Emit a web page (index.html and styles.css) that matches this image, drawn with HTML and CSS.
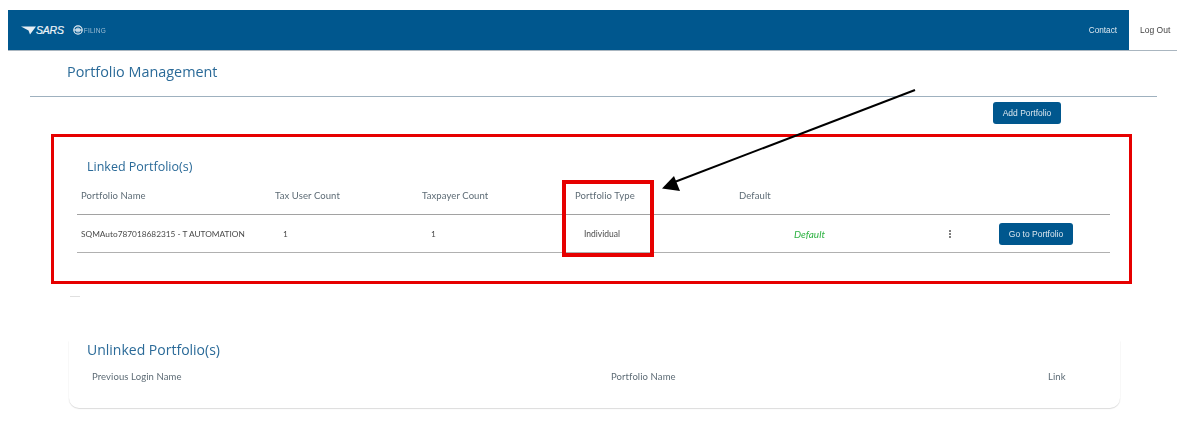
FILE: index.html
```html
<!DOCTYPE html>
<html lang="en">
<head>
<meta charset="utf-8">
<title>Portfolio Management</title>
<link rel="stylesheet" href="styles.css">
</head>
<body>
<header class="topbar">
  <div class="brand">
    <svg class="sars-mark" width="15" height="9" viewBox="0 0 15 9"><path d="M0 0.5 L15 0.5 L9 8.500 L7.500 4.500 Z" fill="#e6eef4"/></svg>
    <span class="sars">SARS</span>
    <svg class="efile-mark" width="10" height="10" viewBox="0 0 11 11"><circle cx="5.500" cy="5.500" r="4.600" fill="none" stroke="#e6eef4" stroke-width="1.300"/><circle cx="5.500" cy="5.500" r="2.800" fill="#9dc0d8"/><rect x="1" y="4.900" width="9" height="1.200" fill="#e6eef4"/></svg>
    <span class="filing">FILING</span>
  </div>
  <nav class="topnav">
    <a class="contact">Contact</a>
  </nav>
  <a class="logout">Log Out</a>
</header>

<main class="page">
  <h1 class="page-title">Portfolio Management</h1>
  <div class="page-actions">
    <button class="btn btn-add">Add Portfolio</button>
  </div>

  <section class="linked">
    <h2 class="section-title">Linked Portfolio(s)</h2>
    <div class="grid grid-head">
      <span>Portfolio Name</span>
      <span>Tax User Count</span>
      <span>Taxpayer Count</span>
      <span>Portfolio Type</span>
      <span>Default</span>
    </div>
    <div class="grid grid-row">
      <span class="name">SQMAuto787018682315 - T AUTOMATION</span>
      <span class="num-a">1</span>
      <span class="num-b">1</span>
      <span class="type">Individual</span>
      <span class="default">Default</span>
      <span class="dots"><i></i><i></i><i></i></span>
      <button class="btn btn-go">Go to Portfolio</button>
    </div>
    <div class="card-tail"></div>
  </section>

  <section class="unlinked">
    <h2 class="section-title">Unlinked Portfolio(s)</h2>
    <div class="unlinked-head">
      <span>Previous Login Name</span>
      <span>Portfolio Name</span>
      <span>Link</span>
    </div>
  </section>
</main>

<div class="mark-outer"></div>
<div class="mark-inner"></div>
<svg class="mark-arrow" width="1181" height="446" viewBox="0 0 1181 446">
  <line x1="915" y1="90" x2="672" y2="183" stroke="#000" stroke-width="2"/>
  <path d="M662 188.500 L674 176 L680 191 Z" fill="#000"/>
</svg>
</body>
</html>
```
FILE: styles.css
```css
* { box-sizing: border-box; }
html, body { margin: 0; padding: 0; background: #fff; }
body {
  width: 1181px;
  height: 446px;
  overflow: hidden;
  position: relative;
  padding-top: 10px;
  font-family: "Lato", "Liberation Sans", sans-serif;
  color: #555;
}
.topbar, .page { filter: blur(0.35px); }
.topbar {
  display: flex;
  align-items: stretch;
  height: 41px;
  margin-left: 8px;
  margin-right: 4px;
  border-bottom: 1px solid #aab6c0;
}
.brand {
  flex: 1;
  display: flex;
  align-items: center;
  padding-left: 13px;
  background: #00578e;
  height: 40px;
}
.sars {
  font: italic 400 10.500px "Liberation Sans", sans-serif;
  color: #eef4f8;
  letter-spacing: -0.2px;
  -webkit-text-stroke: 0.2px #eef4f8;
}
.efile-mark { margin-left: 9px; }
.filing {
  font: 400 6.500px "Liberation Sans", sans-serif;
  color: #9dbdd4;
  margin-left: 1px;
  letter-spacing: 0.2px;
}
.topnav {
  display: flex;
  align-items: center;
  background: #00578e;
  padding-right: 12px;
  height: 40px;
}
.contact {
  font: 400 8.200px "Liberation Sans", sans-serif;
  color: #dbe7ef;
}
.logout {
  width: 48px;
  height: 40px;
  display: flex;
  align-items: center;
  padding-left: 11px;
  font: 400 8.500px "Liberation Sans", sans-serif;
  color: #444;
}
.page { padding: 0 24px 0 30px; }
.page-title {
  margin: 0;
  height: 46px;
  padding: 11px 0 0 37px;
  font: 400 14.400px/19px "Open Sans", sans-serif;
  color: #2a6a98;
  border-bottom: 1px solid #9fb1bf;
}
.page-actions {
  display: flex;
  padding: 5px 0 0 963px;
}
.btn {
  border: 0;
  background: #00578e;
  color: #dbe7ef;
  border-radius: 3px;
  font: 400 8.500px "Liberation Sans", sans-serif;
  padding: 0;
}
.btn-add { width: 68px; height: 22px; }
.linked {
  position: relative;
  margin: 34px 0 0 47px;
  width: 1033px;
}
.section-title {
  margin: 0;
  padding-left: 10px;
  font: 400 12.500px/18px "Open Sans", sans-serif;
  color: #2a6a98;
}
.grid {
  display: grid;
  grid-template-columns: 194px 147px 153px 164px 209px 51px auto;
  align-items: center;
  padding-left: 4px;
}
.grid-head {
  margin-top: 10px;
  height: 29px;
  padding-bottom: 9px;
  font-size: 9.500px;
  letter-spacing: 0.1px;
  color: #5d6b75;
  border-bottom: 1px solid #a2a2a2;
}
.grid-head span:last-child { grid-column: 5 / 8; }
.grid-row {
  height: 38px;
  font-size: 8.300px;
  color: #4a4a4a;
  border-bottom: 1px solid #b0b0b0;
}
.type { font-size: 8.500px; }
.num-a { padding-left: 8px; }
.num-b { padding-left: 9px; }
.type { padding-left: 9px; }
.default {
  padding-left: 55px;
  font-style: italic;
  color: #2fb344;
  font-size: 10px;
}
.dots {
  display: flex;
  flex-direction: column;
  gap: 1px;
  padding-left: 1px;
}
.dots i {
  width: 2px;
  height: 2px;
  border-radius: 50%;
  background: #555;
}
.btn-go { width: 74px; height: 22px; }
.card-tail {
  position: absolute;
  left: -7px;
  top: 138px;
  width: 10px;
  height: 1px;
  background: #e0e0e0;
}
.unlinked {
  margin: 88px 0 0 39px;
  width: 1051px;
  height: 67px;
  padding: 0 0 0 18px;
  border-radius: 0 0 10px 10px;
  box-shadow: 0 1px 1px #dcdcdc, 1px 0 1px #fbfbfb, -1px 0 1px #fbfbfb;
}
.unlinked .section-title { padding-left: 0; font-size: 14px; }
.unlinked-head {
  display: grid;
  grid-template-columns: 519px 437px auto;
  padding: 12px 0 0 5px;
  font-size: 9.500px;
  letter-spacing: 0.1px;
  color: #5d6b75;
}
.mark-outer, .mark-inner, .mark-arrow { position: absolute; pointer-events: none; }
.mark-outer {
  left: 51px;
  top: 134px;
  width: 1081px;
  height: 150px;
  border: 3px solid #e60000;
}
.mark-inner {
  left: 562px;
  top: 180px;
  width: 92px;
  height: 77px;
  border: 4px solid #e60000;
}
.mark-arrow { left: 0; top: 0; }
```
